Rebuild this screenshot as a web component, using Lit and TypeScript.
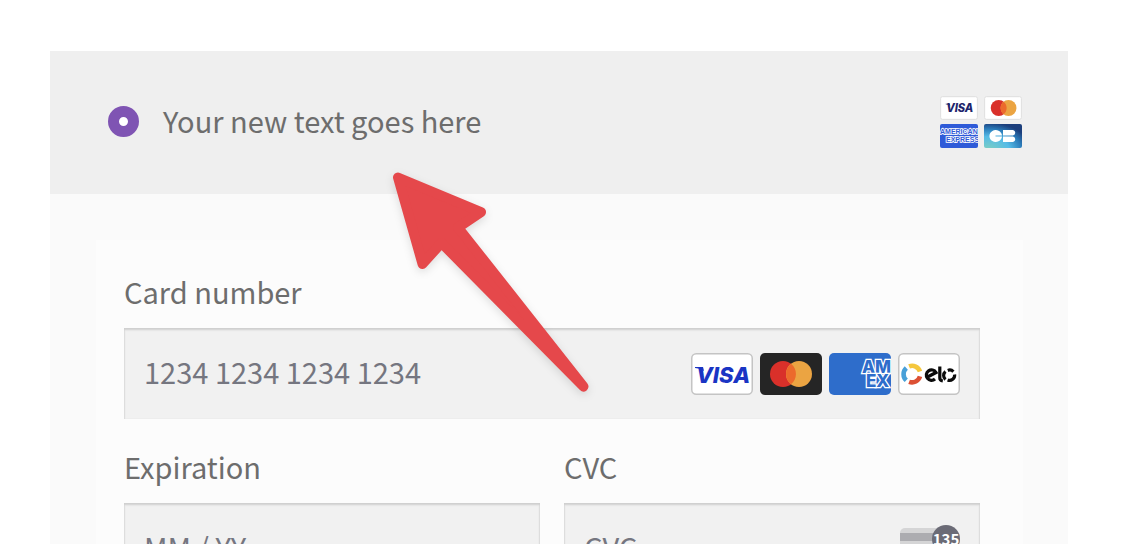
import { LitElement, html, css, svg } from "lit";
import { customElement } from "lit/decorators.js";

const visa = (color: string) => svg`
  <text x="32" y="30" text-anchor="middle" font-family="Inter, sans-serif" font-size="22" font-weight="800" font-style="italic" fill=${color}>VISA</text>
  <path d="M4 14h8l1 4q-4-3-9-3z" fill=${color} />`;

const mastercard = svg`
  <circle cx="23" cy="21" r="13" fill="#d9302a" />
  <circle cx="39" cy="21" r="13" fill="#eba442" />
  <path d="M31 10.8a13 13 0 0 1 0 20.4a13 13 0 0 1 0-20.4z" fill="#ec6a2c" />`;

@customElement("app-root")
export class AppRoot extends LitElement {
  static styles = css`
    :host {
      display: block;
      height: 100vh;
      overflow: hidden;
      position: relative;
      background: #fff;
      color: #6d6d6d;
      font-family: "Noto Sans CJK SC", "Noto Sans", sans-serif;
      font-size: 29px;
      line-height: 44px;
    }
    * {
      box-sizing: border-box;
    }
    .payment {
      margin: 51px 68px 0 50px;
      background: #fafafa;
    }
    .method {
      display: flex;
      align-items: center;
      gap: 24px;
      height: 143px;
      padding: 0 46px 2px 58px;
      background: #efefef;
    }
    .method label {
      flex: 1;
      padding-bottom: 3px;
    }
    .radio {
      appearance: none;
      width: 31px;
      height: 31px;
      margin: 0;
      border: 11px solid #7f54b3;
      border-radius: 50%;
      background: #fff;
    }
    .brands {
      display: grid;
      grid-template-columns: 38px 38px;
      gap: 4px 6px;
    }
    .brands svg,
    .cards svg,
    .cvc {
      display: block;
    }
    .body {
      padding: 46px 45px 60px 46px;
    }
    .form {
      display: grid;
      grid-template-columns: 1fr 1fr;
      gap: 25px 24px;
      padding: 29px 43px 30px 28px;
      background: #fcfcfc;
    }
    .field {
      display: flex;
      flex-direction: column;
      gap: 15px;
      min-width: 0;
    }
    .wide {
      grid-column: 1 / -1;
    }
    .box {
      display: flex;
      align-items: center;
      height: 91px;
      padding: 0 20px;
      background: #f1f1f1;
      box-shadow: inset 0 2px 2px #cfcfcf, inset 1px 0 1px #e2e2e2, inset -1px 0 1px #e2e2e2;
    }
    .box input {
      flex: 1;
      min-width: 0;
      padding: 0 0 5px;
      border: 0;
      outline: 0;
      background: none;
      color: #6d6d6d;
      font: inherit;
    }
    .box input::placeholder {
      color: #757680;
      opacity: 1;
    }
    .cards {
      display: flex;
      gap: 7px;
    }
    .arrow {
      position: absolute;
      left: 370px;
      top: 150px;
      filter: drop-shadow(0 3px 4px rgba(0, 0, 0, 0.12));
      pointer-events: none;
    }
  `;

  render() {
    return html`
      <main class="payment">
        <div class="method">
          <input class="radio" type="radio" id="card" name="method" checked />
          <label for="card">Your new text goes here</label>
          <div class="brands">
            <svg width="38" height="24" viewBox="0 0 62 39" role="img" aria-label="Visa">
              <rect x="1" y="1" width="60" height="37" rx="3" fill="#fff" stroke="#dedede" stroke-width="1.6" />
              <g transform="translate(6 1) scale(0.82)">${visa("#20246b")}</g>
            </svg>
            <svg width="38" height="24" viewBox="0 0 62 39" role="img" aria-label="Mastercard">
              <rect x="1" y="1" width="60" height="37" rx="3" fill="#fff" stroke="#dedede" stroke-width="1.6" />
              <g transform="translate(1 -1.5)">${mastercard}</g>
            </svg>
            <svg width="38" height="24" viewBox="0 0 38 24" role="img" aria-label="American Express">
              <rect width="38" height="24" rx="2" fill="#2f5bd8" />
              <g font-family="Liberation Sans, sans-serif" font-weight="700" font-size="7" fill="#2f5bd8" stroke="#fff" stroke-width="1.6" paint-order="stroke">
                <text x="0" y="10">AMERICAN</text>
                <text x="6" y="18">EXPRESS</text>
              </g>
            </svg>
            <svg width="38" height="24" viewBox="0 0 38 24" role="img" aria-label="CB">
              <defs>
                <radialGradient id="cb" cx="0.1" cy="1.1" r="1.15">
                  <stop offset="0" stop-color="#7fd0c0" />
                  <stop offset="0.5" stop-color="#55bbe6" />
                  <stop offset="0.78" stop-color="#2b7cba" />
                  <stop offset="1" stop-color="#1c3f7c" />
                </radialGradient>
              </defs>
              <rect width="38" height="24" rx="2" fill="url(#cb)" />
              <path d="M18 11.500h-6.500v1H18a6.300 6 0 1 1 0-1zM19 6h10a2.800 2.800 0 0 1 0 5.500H19zM19 12.500h10a2.800 2.800 0 0 1 0 5.500H19z" fill="#fff" />
            </svg>
          </div>
        </div>
        <div class="body">
          <form class="form">
            <div class="field wide">
              <label for="number">Card number</label>
              <div class="box">
                <input id="number" placeholder="1234 1234 1234 1234" inputmode="numeric" />
                <div class="cards">
                  <svg width="62" height="42" viewBox="0 0 62 42" role="img" aria-label="Visa">
                    <rect x="0.75" y="0.75" width="60.5" height="40.5" rx="4.5" fill="#fff" stroke="#c4c4c4" stroke-width="1.5" />
                    ${visa("#1a35c4")}
                  </svg>
                  <svg width="62" height="42" viewBox="0 0 62 42" role="img" aria-label="Mastercard">
                    <rect width="62" height="42" rx="5" fill="#252525" />
                    ${mastercard}
                  </svg>
                  <svg width="62" height="42" viewBox="0 0 62 42" role="img" aria-label="American Express">
                    <rect width="62" height="42" rx="5" fill="#2e6dcb" />
                    <g font-family="Inter, sans-serif" font-weight="800" font-size="17" fill="#2e6dcb" stroke="#fff" stroke-width="2.6" paint-order="stroke">
                      <text x="33" y="20">AM</text>
                      <text x="37" y="34">EX</text>
                    </g>
                  </svg>
                  <svg width="62" height="42" viewBox="0 0 62 42" role="img" aria-label="Elo">
                    <rect x="0.75" y="0.75" width="60.5" height="40.5" rx="4.5" fill="#fff" stroke="#c4c4c4" stroke-width="1.5" />
                    <g fill="none" stroke-width="4.6">
                      <path d="M11.100 13.400a8.300 8.300 0 0 1 10.900 5" stroke="#f5c73d" />
                      <path d="M22 23.400a8.300 8.300 0 0 1-10.900 5.400" stroke="#dc5034" />
                      <path d="M8.300 15a8.300 8.300 0 0 0 0 12.300" stroke="#48a0d8" />
                    </g>
                    <g fill="none" stroke="#0b0b0b" stroke-width="3.2">
                      <path d="M28.500 24.500L38 19.500A5.200 5.200 0 1 0 37 26" />
                      <path d="M41.800 13.500V25q0 2.500 3 3" />
                      <path d="M47.500 26.500a5.200 5.200 0 0 1 0-8M49.800 17.400a5.200 5.200 0 0 1 5.600 1.200M56.600 21.500a5.200 5.200 0 0 1-7 5.600" />
                    </g>
                  </svg>
                </div>
              </div>
            </div>
            <div class="field">
              <label for="expiry">Expiration</label>
              <div class="box"><input id="expiry" placeholder="MM / YY" /></div>
            </div>
            <div class="field">
              <label for="cvc">CVC</label>
              <div class="box">
                <input id="cvc" placeholder="CVC" />
                <svg class="cvc" width="60" height="48" viewBox="0 0 60 48" role="img" aria-label="Security code">
                  <rect y="3" width="54" height="40" rx="5" fill="#d5d5d6" />
                  <rect y="8" width="54" height="8" fill="#acacb0" />
                  <circle cx="46" cy="14" r="14" fill="#6b6b76" />
                  <text x="46" y="20" text-anchor="middle" font-family="Noto Sans CJK SC, sans-serif" font-size="15" font-weight="700" fill="#fff">135</text>
                </svg>
              </div>
            </div>
          </form>
        </div>
      </main>
      <svg class="arrow" width="240" height="260" viewBox="0 0 240 260" aria-hidden="true">
        <path d="M28 27.500L111 62L88 77.500L213.500 236.500L71.500 93L52.500 114z" fill="#e5484b" stroke="#e5484b" stroke-width="10" stroke-linejoin="round" />
      </svg>
    `;
  }
}
